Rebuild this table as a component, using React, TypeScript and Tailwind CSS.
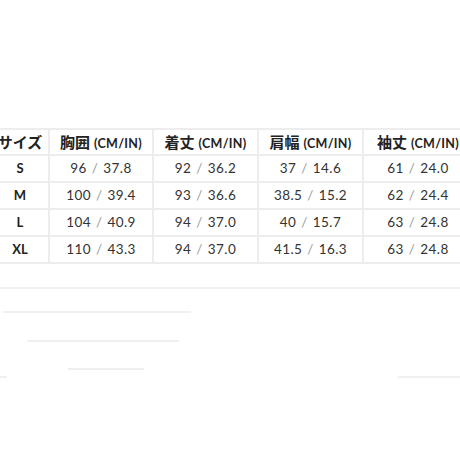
const HEADERS = ["サイズ", "胸囲", "着丈", "肩幅", "袖丈"];

const DATA = [
  { size: "S", cells: [["96", "37.8"], ["92", "36.2"], ["37", "14.6"], ["61", "24.0"]] },
  { size: "M", cells: [["100", "39.4"], ["93", "36.6"], ["38.5", "15.2"], ["62", "24.4"]] },
  { size: "L", cells: [["104", "40.9"], ["94", "37.0"], ["40", "15.7"], ["63", "24.8"]] },
  { size: "XL", cells: [["110", "43.3"], ["94", "37.0"], ["41.5", "16.3"], ["63", "24.8"]] },
];

const WIDTHS = ["w-[56px]", "w-[104px]", "w-[105px]", "w-[105px]", "w-[110px]"];

const font = { fontFamily: "Lato, 'Noto Sans CJK JP', sans-serif" };

export default function App() {
  return (
    <div className="h-[460px] w-[460px] overflow-hidden bg-white text-[#222]" style={font}>
      <div className="ml-[-8px] pt-[128px]">
        <div className="flex h-[28px] border-y-2 border-[#ededed]">
          {HEADERS.map((h, i) => (
            <div
              key={h}
              className={`${WIDTHS[i]} flex shrink-0 items-center justify-center ${i > 0 ? "border-l-2 border-[#ededed]" : ""} text-[14px] font-bold`}
            >
              {i === 0 ? (
                <span className="text-[15px]">{h}</span>
              ) : (
                <span className="flex items-baseline gap-[4px]">
                  <span className="text-[15px]">{h}</span>
                  <span className="text-[12.5px] tracking-[0.3px]">(CM/IN)</span>
                </span>
              )}
            </div>
          ))}
        </div>
        {DATA.map((row) => (
          <div key={row.size} className="flex h-[27px] border-b-2 border-[#ededed]">
            <div className={`${WIDTHS[0]} flex shrink-0 items-center justify-center text-[13px] font-bold`}>
              {row.size}
            </div>
            {row.cells.map(([cm, inch], i) => (
              <div
                key={i}
                className={`${WIDTHS[i + 1]} flex shrink-0 items-center justify-center border-l-2 border-[#ededed] text-[13.5px] tracking-[0.4px] text-[#333]`}
              >
                {cm}
                <span className="mx-[5px] text-[#9a9a9a]">/</span>
                {inch}
              </div>
            ))}
          </div>
        ))}
      </div>
      <div className="mt-[23px] h-[2px] bg-[#f1f1f1]" />
      <div className="ml-[3px] mt-[22px] h-[2px] w-[188px] bg-[#f0f0f0]" />
      <div className="ml-[27px] mt-[27px] h-[2px] w-[152px] bg-[#f0f0f0]" />
      <div className="ml-[68px] mt-[26px] h-[2px] w-[76px] bg-[#eeeeee]" />
      <div className="mt-[6px] flex justify-between">
        <div className="h-[2px] w-[7px] bg-[#f0f0f0]" />
        <div className="h-[2px] w-[62px] bg-[#f0f0f0]" />
      </div>
    </div>
  );
}
